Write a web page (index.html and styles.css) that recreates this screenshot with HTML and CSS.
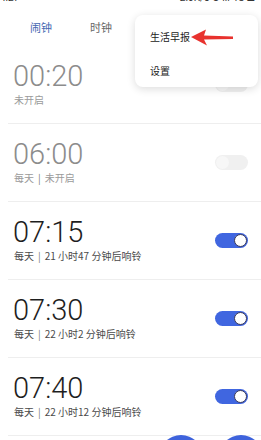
FILE: index.html
```html
<!DOCTYPE html>
<html lang="zh-CN">
<head>
<meta charset="utf-8">
<link rel="stylesheet" href="styles.css">
</head>
<body>
<div class="screen">
  <div class="status">
    <div class="status-inner">
      <span>4:27</span>
      <span>2.0K/s ⏱ ıll 4G ▭</span>
    </div>
  </div>
  <div class="tabs">
    <span class="tab active">闹钟</span>
    <span class="tab">时钟</span>
  </div>
  <div class="list">
    <div class="row off">
      <div class="info"><div class="time">00:20</div><div class="sub">未开启</div></div>
      <span class="toggle"></span>
    </div>
    <div class="row off">
      <div class="info"><div class="time">06:00</div><div class="sub">每天<span class="sep">|</span>未开启</div></div>
      <span class="toggle"></span>
    </div>
    <div class="row on">
      <div class="info"><div class="time">07:15</div><div class="sub">每天<span class="sep">|</span>21 小时47 分钟后响铃</div></div>
      <span class="toggle"></span>
    </div>
    <div class="row on">
      <div class="info"><div class="time">07:30</div><div class="sub">每天<span class="sep">|</span>22 小时2 分钟后响铃</div></div>
      <span class="toggle"></span>
    </div>
    <div class="row on">
      <div class="info"><div class="time">07:40</div><div class="sub">每天<span class="sep">|</span>22 小时12 分钟后响铃</div></div>
      <span class="toggle"></span>
    </div>
  </div>
  <div class="menu">
    <div class="menu-item">生活早报</div>
    <div class="menu-item">设置</div>
  </div>
  <svg class="arrow" width="44" height="18" viewBox="0 0 44 18">
    <path d="M0 8 L15 0.5 L13 6.5 L42 7.5 L42 10 L13 10.5 L16 16.5 Z" fill="#e8322e"/>
  </svg>
  <span class="fab fab1"></span>
  <span class="fab fab2"></span>
</div>
</body>
</html>
```
FILE: styles.css
```css
html, body {
  margin: 0;
  padding: 0;
  background: #fff;
}
.screen {
  position: relative;
  width: 261px;
  height: 440px;
  overflow: hidden;
  font-family: "Noto Sans CJK SC", "Noto Sans", sans-serif;
}
.status {
  height: 5px;
  overflow: hidden;
}
.status-inner {
  display: flex;
  justify-content: space-between;
  margin-top: -8px;
  padding: 0 6px 0 0;
  font-family: Roboto, "Noto Sans CJK SC", sans-serif;
  font-size: 10px;
  line-height: 12px;
  color: #333;
}
.tabs {
  display: flex;
  height: 41px;
  box-sizing: border-box;
  padding: 16px 0 0 11px;
}
.tab {
  width: 60px;
  text-align: center;
  font-size: 11px;
  line-height: 12px;
  color: #666;
}
.tab.active {
  color: #4466b0;
}
.list {
  margin-left: 8px;
}
.row {
  display: flex;
  align-items: center;
  justify-content: space-between;
  height: 78px;
  box-sizing: border-box;
  border-bottom: 1px solid #eeeeee;
  padding: 0 13px 3px 5px;
}
.time {
  font-family: Roboto, sans-serif;
  font-weight: 300;
  font-size: 29px;
  line-height: 34px;
  color: #1e1e1e;
}
.sub {
  font-size: 10px;
  line-height: 14px;
  color: #4a4a4a;
  padding-left: 1px;
}
.sep {
  margin: 0 4px;
  color: #777;
}
.off .time {
  color: #8c8c8c;
}
.off .sub {
  color: #9a9a9a;
}
.toggle {
  position: relative;
  width: 33px;
  height: 15px;
  border-radius: 8px;
  background: #f0f0f0;
  margin-bottom: -3px;
}
.toggle::after {
  content: "";
  position: absolute;
  top: 1px;
  left: 1px;
  width: 13px;
  height: 13px;
  border-radius: 50%;
  background: #f7f7f7;
}
.on .toggle {
  background: #4066e0;
}
.on .toggle::after {
  left: auto;
  right: 1px;
  top: 1px;
  width: 11px;
  height: 11px;
  background: #fff;
  border: 1px solid #3a3a5a;
}
.menu {
  position: absolute;
  left: 135px;
  top: 15px;
  width: 123px;
  height: 72px;
  box-sizing: border-box;
  padding-top: 5px;
  background: #fff;
  border-radius: 8px;
  box-shadow: 0 2px 8px rgba(0, 0, 0, 0.14);
}
.menu-item {
  height: 34px;
  line-height: 34px;
  padding-left: 15px;
  font-size: 10px;
  color: #222;
}
.arrow {
  position: absolute;
  left: 191px;
  top: 29px;
}
.fab {
  position: absolute;
  top: 435px;
  width: 44px;
  height: 44px;
  border-radius: 50%;
  background: #3e63dc;
}
.fab1 {
  left: 159px;
}
.fab2 {
  left: 219px;
}
```
